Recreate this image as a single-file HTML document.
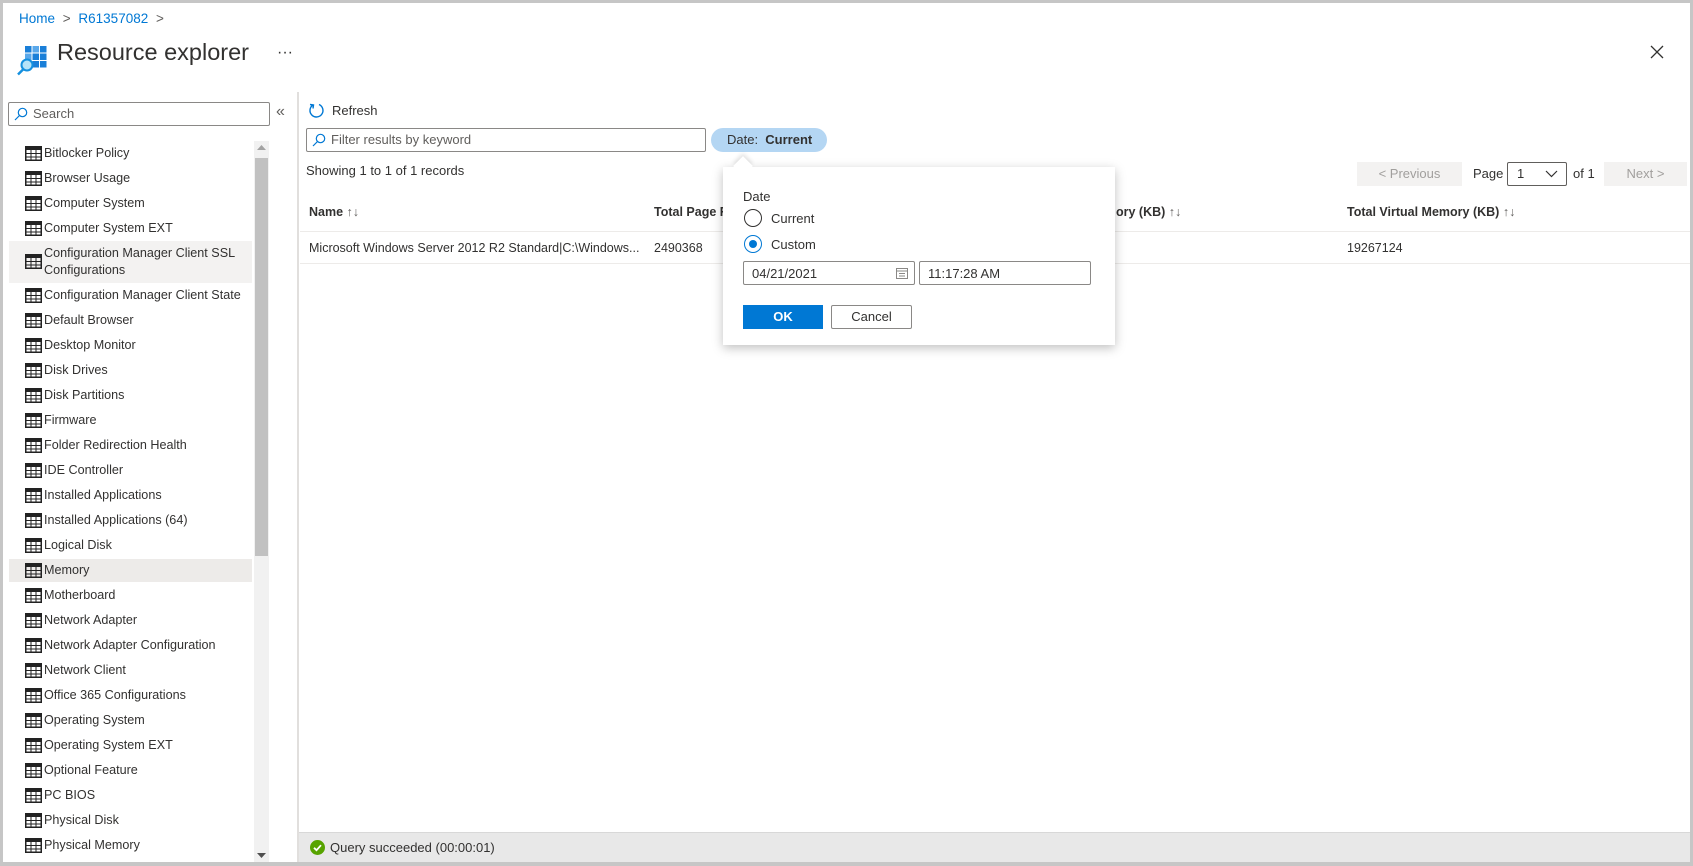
<!DOCTYPE html>
<html><head><meta charset="utf-8"><style>
*{box-sizing:border-box;margin:0;padding:0}
body{width:1693px;height:866px;overflow:hidden;background:#fff;font-family:"Liberation Sans",sans-serif;color:#323130;font-size:13px;position:relative}
.a{position:absolute;white-space:nowrap}
.frame{position:absolute;left:0;top:0;width:1693px;height:866px;border:3px solid #c6c6c6;border-bottom-width:4px}
.item{position:absolute;left:9px;width:243px;height:25px;line-height:25px;font-size:12.6px}
.item svg{position:absolute;left:16px;top:5px}
.item span{position:absolute;left:35px}
.sel{background:#edebe9}
.hl{background:#f3f2f1}
.box{position:absolute;border:1px solid #8a8886;border-radius:2px;background:#fff}
</style></head><body>
<div class="frame"></div>
<div class="a" style="left:19px;top:11px;font-size:13.5px;color:#0078d4">Home <span style="color:#605e5c;margin:0 4px">&gt;</span> R61357082 <span style="color:#605e5c;margin-left:4px">&gt;</span></div>
<svg class="a" style="left:16px;top:42px" width="32" height="34" viewBox="0 0 32 34">
<g fill="#1a7fd8"><rect x="9" y="4" width="6.5" height="6.5"/><rect x="16.5" y="4" width="6.5" height="6.5"/><rect x="24" y="4" width="6.5" height="6.5"/><rect x="9" y="11.5" width="6.5" height="6.5"/><rect x="16.5" y="11.5" width="6.5" height="6.5"/><rect x="24" y="11.5" width="6.5" height="6.5"/><rect x="16.5" y="19" width="6.5" height="6.5"/><rect x="24" y="19" width="6.5" height="6.5"/></g>
<g fill="#5aa8ea"><rect x="16.5" y="4" width="6.5" height="6.5"/><rect x="9" y="11.5" width="6.5" height="6.5"/></g>
<circle cx="11" cy="23" r="5.5" fill="#b5e3f8" stroke="#1490df" stroke-width="2"/><line x1="7" y1="27.5" x2="2" y2="32.5" stroke="#1490df" stroke-width="2.5"/></svg>
<div class="a" style="left:57px;top:39px;font-size:23.5px;color:#323130">Resource explorer</div>
<div class="a" style="left:277px;top:44px;font-size:16px">···</div>
<svg class="a" style="left:1650px;top:45px" width="14" height="14"><path d="M1 1L13 13M13 1L1 13" stroke="#323130" stroke-width="1.3"/></svg>

<!-- sidebar -->
<div class="box" style="left:8px;top:102px;width:262px;height:24px"></div>
<svg class="a" style="left:14px;top:107px" width="14" height="14"><circle cx="8.5" cy="5.5" r="4.2" fill="none" stroke="#0078d4" stroke-width="1.2"/><line x1="5.5" y1="8.5" x2="1" y2="13" stroke="#0078d4" stroke-width="1.2"/></svg>
<div class="a" style="left:33px;top:106px;font-size:13px;color:#605e5c">Search</div>
<div class="a" style="left:276px;top:103px;font-size:16px;color:#605e5c">«</div>
<div class="a" style="left:297px;top:92px;width:2px;height:770px;background:#e1dfdd"></div>
<div class="a" style="left:254px;top:141px;width:15px;height:721px;background:#f1f1f1"></div>
<div class="a" style="left:255px;top:158px;width:13px;height:398px;background:#c1c1c1"></div>
<svg class="a" style="left:257px;top:145px" width="9" height="6"><path d="M0 5L4.5 0L9 5Z" fill="#a3a3a3"/></svg>
<svg class="a" style="left:257px;top:853px" width="9" height="6"><path d="M0 0L4.5 5L9 0Z" fill="#505050"/></svg>
<div class="item hl" style="top:241px;height:42px"></div>
<div class="item sel" style="top:559px;height:23px"></div>
<div id="list"></div>

<!-- right -->
<svg class="a" style="left:308px;top:102px" width="17" height="17"><path d="M5 3A6.5 6.5 0 1 0 11 2.5" fill="none" stroke="#0078d4" stroke-width="1.4"/><path d="M2 2.5L5.5 3L5 6.5" fill="none" stroke="#0078d4" stroke-width="1.4"/></svg>
<div class="a" style="left:332px;top:103px;font-size:13px">Refresh</div>
<div class="box" style="left:306px;top:128px;width:400px;height:24px"></div>
<svg class="a" style="left:312px;top:133px" width="14" height="14"><circle cx="8.5" cy="5.5" r="4.2" fill="none" stroke="#0078d4" stroke-width="1.2"/><line x1="5.5" y1="8.5" x2="1" y2="13" stroke="#0078d4" stroke-width="1.2"/></svg>
<div class="a" style="left:331px;top:132px;font-size:13px;color:#605e5c">Filter results by keyword</div>
<div class="a" style="left:711px;top:128px;width:116px;height:24px;border-radius:12px;background:#b4d6f3;line-height:24px;padding-left:16px;font-size:13px">Date:&nbsp; <b>Current</b></div>
<div class="a" style="left:306px;top:163px;font-size:13px">Showing 1 to 1 of 1 records</div>

<div class="a" style="left:1357px;top:162px;width:105px;height:24px;background:#f3f2f1;color:#a19f9d;text-align:center;line-height:24px">&lt; Previous</div>
<div class="a" style="left:1473px;top:166px">Page</div>
<div class="box" style="left:1507px;top:162px;width:60px;height:24px;border-color:#605e5c"></div>
<div class="a" style="left:1517px;top:166px">1</div>
<svg class="a" style="left:1545px;top:170px" width="13" height="8"><path d="M1 1L6.5 6.5L12 1" fill="none" stroke="#323130" stroke-width="1.2"/></svg>
<div class="a" style="left:1573px;top:166px">of 1</div>
<div class="a" style="left:1604px;top:162px;width:83px;height:24px;background:#f3f2f1;color:#a19f9d;text-align:center;line-height:24px">Next &gt;</div>

<div class="a" style="left:309px;top:205px;font-weight:bold;font-size:12.5px">Name <span style="font-weight:normal;color:#605e5c">↑↓</span></div>
<div class="a" style="left:654px;top:205px;font-weight:bold;font-size:12.5px">Total Page F</div>
<div class="a" style="left:1116px;top:205px;font-weight:bold;font-size:12.5px">ory (KB) <span style="font-weight:normal;color:#605e5c">↑↓</span></div>
<div class="a" style="left:1347px;top:205px;font-weight:bold;font-size:12.5px">Total Virtual Memory (KB) <span style="font-weight:normal;color:#605e5c">↑↓</span></div>
<div class="a" style="left:300px;top:231px;width:1390px;height:1px;background:#edebe9"></div>
<div class="a" style="left:309px;top:241px;font-size:12.5px">Microsoft Windows Server 2012 R2 Standard|C:\Windows...</div>
<div class="a" style="left:654px;top:241px;font-size:12.5px">2490368</div>
<div class="a" style="left:1347px;top:241px;font-size:12.5px">19267124</div>
<div class="a" style="left:300px;top:263px;width:1390px;height:1px;background:#edebe9"></div>

<!-- popup -->
<div class="a" style="left:723px;top:167px;width:392px;height:178px;background:#fff;box-shadow:0 3px 10px rgba(0,0,0,.25)"></div>
<div class="a" style="left:736px;top:159px;width:14px;height:14px;background:#fff;transform:rotate(45deg);box-shadow:-2px -2px 4px rgba(0,0,0,.12)"></div>
<div class="a" style="left:723px;top:167px;width:392px;height:12px;background:#fff"></div>
<div class="a" style="left:743px;top:189px">Date</div>
<div class="a" style="left:744px;top:209px;width:18px;height:18px;border:1px solid #323130;border-radius:50%"></div>
<div class="a" style="left:771px;top:211px">Current</div>
<div class="a" style="left:744px;top:235px;width:18px;height:18px;border:1px solid #0078d4;border-radius:50%"></div>
<div class="a" style="left:749px;top:240px;width:8px;height:8px;background:#0078d4;border-radius:50%"></div>
<div class="a" style="left:771px;top:237px">Custom</div>
<div class="box" style="left:743px;top:261px;width:172px;height:24px"></div>
<div class="a" style="left:752px;top:266px">04/21/2021</div>
<svg class="a" style="left:896px;top:267px" width="12" height="12"><rect x=".5" y="1.5" width="11" height="10" fill="none" stroke="#8a8886"/><path d="M1 4h10M3 6.5h6M3 9h6" stroke="#8a8886"/></svg>
<div class="box" style="left:919px;top:261px;width:172px;height:24px"></div>
<div class="a" style="left:928px;top:266px">11:17:28 AM</div>
<div class="a" style="left:743px;top:305px;width:80px;height:24px;background:#0078d4;color:#fff;font-weight:bold;text-align:center;line-height:24px">OK</div>
<div class="box" style="left:831px;top:305px;width:81px;height:24px;text-align:center;line-height:22px">Cancel</div>

<!-- status -->
<div class="a" style="left:299px;top:832px;width:1391px;height:30px;background:#e8e8e8;border-top:1px solid #d8d8d8"></div>
<svg class="a" style="left:310px;top:840px" width="15" height="15"><circle cx="7.5" cy="7.5" r="7.5" fill="#57a300"/><path d="M4 7.8L6.5 10.2L11 5.2" fill="none" stroke="#fff" stroke-width="1.8"/></svg>
<div class="a" style="left:330px;top:840px;font-size:13px">Query succeeded (00:00:01)</div>

<script>
var names=["Bitlocker Policy","Browser Usage","Computer System","Computer System EXT","SSL","Configuration Manager Client State","Default Browser","Desktop Monitor","Disk Drives","Disk Partitions","Firmware","Folder Redirection Health","IDE Controller","Installed Applications","Installed Applications (64)","Logical Disk","Memory","Motherboard","Network Adapter","Network Adapter Configuration","Network Client","Office 365 Configurations","Operating System","Operating System EXT","Optional Feature","PC BIOS","Physical Disk","Physical Memory"];
var ic='<svg width="17" height="15" viewBox="0 0 17 15"><rect x=".75" y=".75" width="15.5" height="13.5" fill="none" stroke="#222" stroke-width="1.5"/><rect x="1" y="1" width="15" height="3" fill="#222"/><path d="M1 7.5h15M1 11h15M6 1v13M11 1v13" stroke="#222" stroke-width="1"/></svg>';
var h="",y=141;
names.forEach(function(n){
 if(n=="SSL"){h+='<div class="item" style="top:241px;height:42px;line-height:17px">'+ic.replace('<svg','<svg style="top:13px"')+'<span style="top:4px">Configuration Manager Client SSL<br>Configurations</span></div>';y=283;return;}
 h+='<div class="item" style="top:'+y+'px">'+ic+'<span>'+n+'</span></div>';y+=25;
});
document.getElementById("list").innerHTML=h;
</script>
</body></html>
